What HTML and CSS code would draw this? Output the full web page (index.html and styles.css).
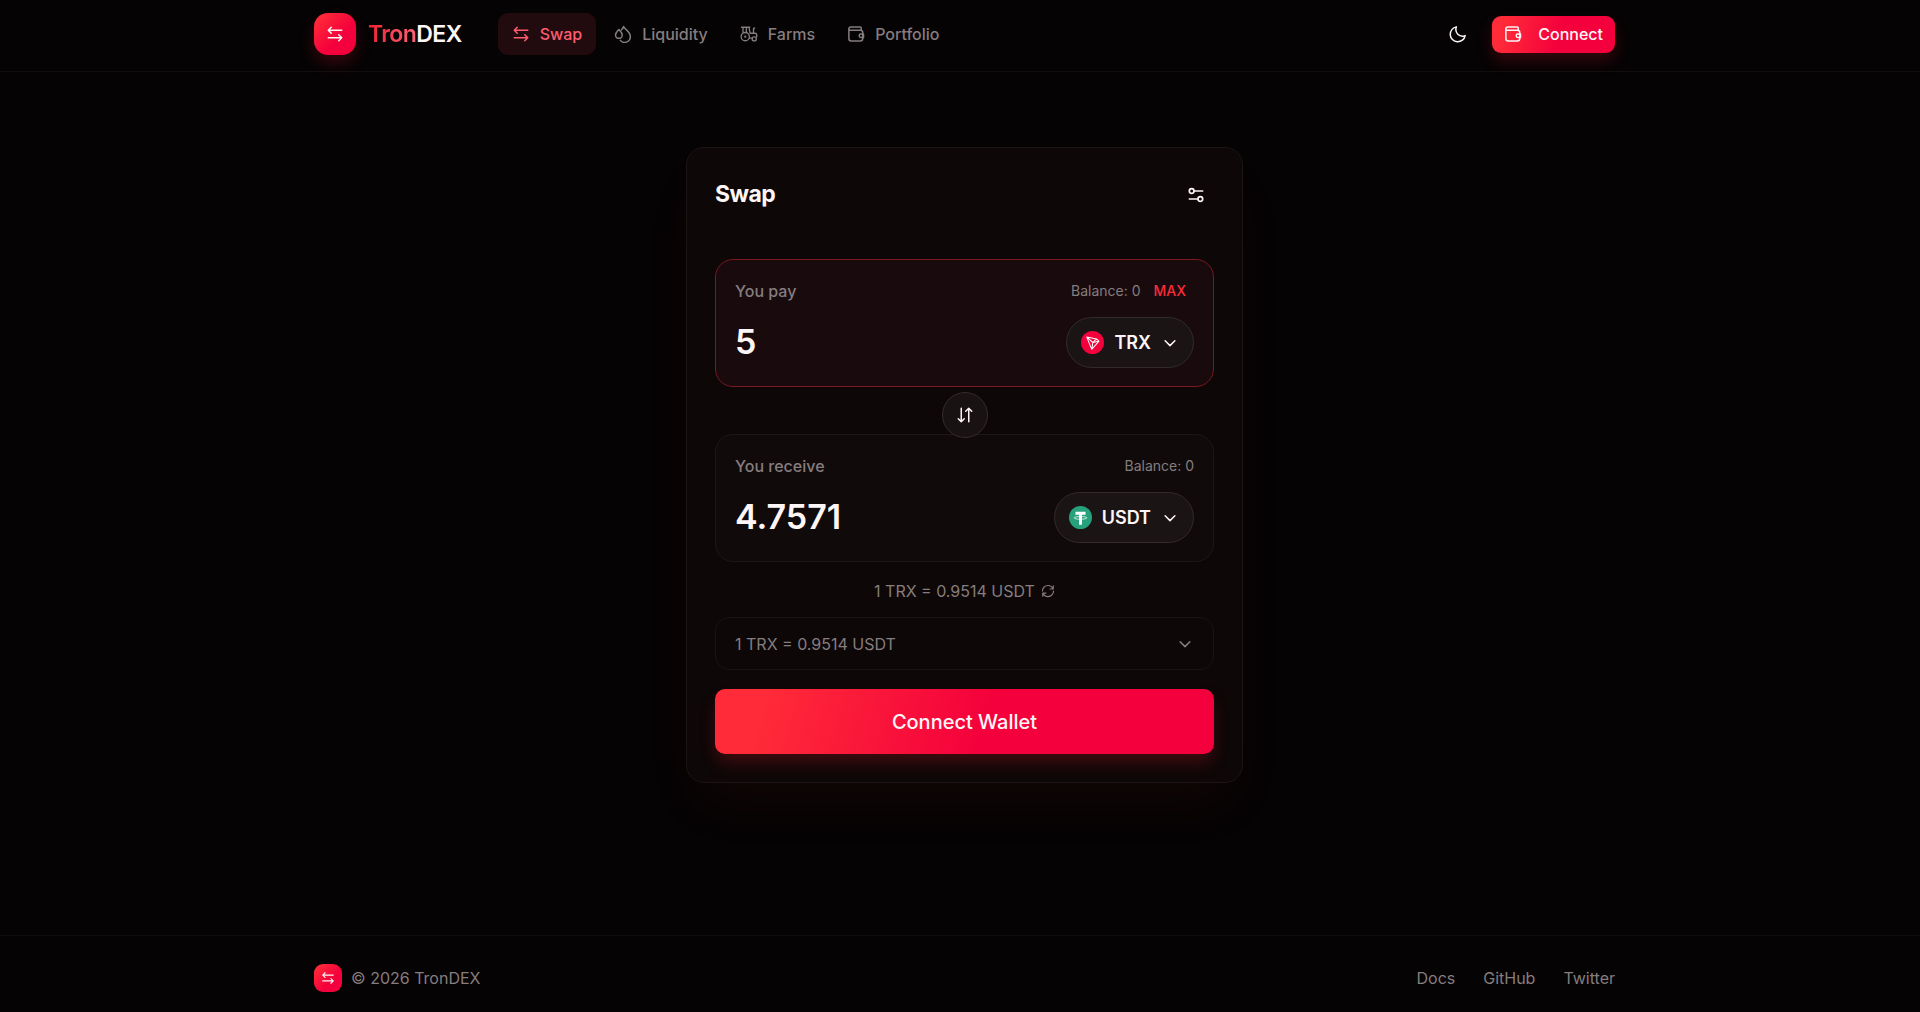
FILE: index.html
```html
<!DOCTYPE html>
<html lang="en">
<head>
<meta charset="utf-8">
<meta name="viewport" content="width=device-width, initial-scale=1">
<title>TronDEX</title>
<link rel="stylesheet" href="styles.css">
</head>
<body>
<svg class="sprite" aria-hidden="true">
  <symbol id="i-swap" viewBox="0 0 24 24"><path d="M21 7H3M7 3 3 7l4 4M3 17H21M17 13l4 4-4 4"/></symbol>
  <symbol id="i-drops" viewBox="0 0 24 24"><path d="M6.500 6C4.800 8.300 2 10.500 2 13.300a4.500 4.500 0 0 0 9 0C11 10.500 8.200 8.300 6.500 6Z"/><path d="M10 6.500C11.500 4.800 12.500 3.400 12.800 2c2.300 4.600 8.900 7 8.900 12.700A7.500 7.500 0 0 1 8.500 20.500"/></symbol>
  <symbol id="i-tractor" viewBox="0 0 24 24"><g stroke-width="1.800"><circle cx="7" cy="15.500" r="5.500"/><circle cx="7" cy="15.500" r=".6"/><circle cx="19" cy="18.500" r="2.700"/><path d="M2 3h11M4 3v6.500M8.500 3v6.500M12 3l1.500 8H20c1.500 0 2.300 1 2.300 2.300V16M12.800 17.500h3.400M18 11V5.500C18 4.500 18.500 4 19.500 4"/></g></symbol>
  <symbol id="i-wallet" viewBox="0 0 24 24"><path d="M2.500 5v13c0 2 1 3.300 3.300 3.300h12c2 0 3.200-1 3.200-3.300v-8c0-2-1-3-3-3H4.500c-1.200 0-2-.8-2-2s.8-2.500 2.500-2.500h12.500c1 0 1.500.5 1.500 1.500v3M22 12h-3.500a2.200 2.200 0 0 0 0 4.500H22z"/></symbol>
  <symbol id="i-moon" viewBox="0 0 24 24"><path d="M21.500 14.080A8.400 8.400 0 0 1 17.900 14.900 8.800 8.800 0 0 1 9.100 6.100C9.100 4.800 9.400 3.600 9.920 2.500A10 10 0 1 0 21.500 14.080Z"/></symbol>
  <symbol id="i-sliders" viewBox="0 0 24 24"><g stroke-width="2.500"><circle cx="5.500" cy="6" r="3.500"/><circle cx="18.500" cy="18" r="3.500"/><path d="M9 6H22M2 18h13"/></g></symbol>
  <symbol id="i-flip" viewBox="0 0 24 24"><path d="M7 3v18M3 17l4 4 4-4M17 21V3M13 7l4-4 4 4"/></symbol>
  <symbol id="i-chevron" viewBox="0 0 24 24"><path d="m5.500 9 6.500 6.500L18.500 9"/></symbol>
  <symbol id="i-refresh" viewBox="0 0 24 24"><path d="M21 3v5.500h-5.500M3 21v-5.500h5.500M2.500 12C2.500 6.500 7 2.500 12 2.500c4 0 7 2 8.700 5.800M21.500 12c0 5.500-4.500 9.500-9.500 9.500-4 0-7-2-8.700-5.800"/></symbol>
</svg>

<header class="site-header">
  <div class="container">
    <a class="brand" href="#">
      <span class="logo"><svg class="icon"><use href="#i-swap"/></svg></span>
      <span class="brand-name"><span class="brand-accent">Tron</span>DEX</span>
    </a>
    <nav class="nav">
      <a class="nav-link active" href="#"><svg class="icon"><use href="#i-swap"/></svg>Swap</a>
      <a class="nav-link" href="#"><svg class="icon"><use href="#i-drops"/></svg>Liquidity</a>
      <a class="nav-link" href="#"><svg class="icon"><use href="#i-tractor"/></svg>Farms</a>
      <a class="nav-link" href="#"><svg class="icon"><use href="#i-wallet"/></svg>Portfolio</a>
    </nav>
    <div class="actions">
      <button class="icon-button" type="button" aria-label="Toggle theme"><svg class="icon"><use href="#i-moon"/></svg></button>
      <button class="connect" type="button"><svg class="icon"><use href="#i-wallet"/></svg>Connect</button>
    </div>
  </div>
</header>

<main class="main">
  <section class="card">
    <div class="card-head">
      <h1 class="card-title">Swap</h1>
      <button class="icon-button" type="button" aria-label="Settings"><svg class="icon small"><use href="#i-sliders"/></svg></button>
    </div>

    <div class="field focused">
      <div class="field-row">
        <label class="label" for="pay">You pay</label>
        <div class="balance">Balance: 0<button class="max" type="button">MAX</button></div>
      </div>
      <div class="field-row">
        <input class="amount" id="pay" type="text" inputmode="decimal" value="5">
        <button class="token" type="button">
          <svg class="coin" viewBox="0 0 32 32"><circle cx="16" cy="16" r="16" fill="#f4003c"/><path d="M8 8.500 21.500 11 25 14.200 15 25.500ZM8 8.500l8.500 7.500L15 25.500M16.500 16l5-5M16.500 16l8.500-1.800" fill="none" stroke="#fff" stroke-width="1.400" stroke-linejoin="round"/></svg>
          TRX<svg class="icon"><use href="#i-chevron"/></svg>
        </button>
      </div>
    </div>

    <div class="flip-row">
      <button class="flip" type="button" aria-label="Switch tokens"><svg class="icon"><use href="#i-flip"/></svg></button>
    </div>

    <div class="field">
      <div class="field-row">
        <label class="label" for="receive">You receive</label>
        <div class="balance">Balance: 0</div>
      </div>
      <div class="field-row">
        <input class="amount" id="receive" type="text" value="4.7571" readonly>
        <button class="token" type="button">
          <svg class="coin" viewBox="0 0 32 32"><circle cx="16" cy="16" r="16" fill="#26a17b"/><path d="M9 8h14v4h-5v14h-4V12H9Z" fill="#fff"/><ellipse cx="16" cy="16.500" rx="9" ry="1.900" fill="none" stroke="#fff" stroke-width="1"/></svg>
          USDT<svg class="icon"><use href="#i-chevron"/></svg>
        </button>
      </div>
    </div>

    <button class="rate" type="button">1 TRX = 0.9514 USDT<svg class="icon"><use href="#i-refresh"/></svg></button>
    <button class="details" type="button" aria-expanded="false">1 TRX = 0.9514 USDT<svg class="icon"><use href="#i-chevron"/></svg></button>
    <button class="submit" type="button">Connect Wallet</button>
  </section>
</main>

<footer class="site-footer">
  <div class="container">
    <div class="copyright"><span class="logo logo-small"><svg class="icon"><use href="#i-swap"/></svg></span>© 2026 TronDEX</div>
    <div class="footer-links">
      <a href="#">Docs</a>
      <a href="#">GitHub</a>
      <a href="#">Twitter</a>
    </div>
  </div>
</footer>
</body>
</html>
```
FILE: styles.css
```css
:root {
  --bg: #050304;
  --text: #fdf5f6;
  --muted: #857d7e;
  --line: #1c1516;
  --gradient: linear-gradient(135deg, #ff2b38 10%, #f4003c 60%);
  --gradient-button: linear-gradient(105deg, #ff2b38 10%, #f4003c 55%);
}

* { box-sizing: border-box; }

body {
  margin: 0;
  min-height: 100vh;
  display: flex;
  flex-direction: column;
  background: var(--bg);
  color: var(--text);
  font: 400 16px/24px Inter, "Liberation Sans", sans-serif;
}

a { color: inherit; text-decoration: none; }

button {
  margin: 0;
  padding: 0;
  border: 0;
  background: none;
  color: inherit;
  font: inherit;
  cursor: pointer;
}

.sprite { display: none; }

.icon {
  width: 18px;
  height: 18px;
  flex: none;
  fill: none;
  stroke: currentColor;
  stroke-width: 2;
  stroke-linecap: round;
  stroke-linejoin: round;
}
.icon.small { width: 16px; height: 16px; }

.site-header,
.main,
.site-footer { padding-left: 9px; }

.container {
  width: 100%;
  max-width: 1301px;
  margin: 0 auto;
  display: flex;
  align-items: center;
}

.site-header { border-bottom: 1px solid #120e0f; }
.site-header .container { padding: 13px 0 16px; }

.brand { display: flex; align-items: center; gap: 12px; margin-right: 36px; }
.brand-name { font-size: 23px; line-height: 32px; font-weight: 600; letter-spacing: -0.025em; }
.brand-accent {
  background: linear-gradient(90deg, #ee2232, #ff6377);
  background-clip: text;
  -webkit-background-clip: text;
  color: transparent;
}

.logo {
  width: 42px;
  height: 42px;
  display: grid;
  place-items: center;
  border-radius: 14px;
  background: var(--gradient);
  box-shadow: 0 8px 16px rgba(244, 30, 45, 0.2);
}
.logo-small { width: 28px; height: 28px; border-radius: 9px; box-shadow: none; }
.logo-small .icon { width: 14px; height: 14px; }

.nav { display: flex; gap: 4px; }
.nav-link {
  display: flex;
  align-items: center;
  gap: 10px;
  padding: 9px 14px;
  border-radius: 10px;
  color: var(--muted);
  font-weight: 500;
}
.nav-link.active { background: #220b0e; color: #ff5c70; }

.actions { display: flex; align-items: center; gap: 16px; margin-left: auto; }
.icon-button { width: 37px; height: 37px; display: grid; place-items: center; }
.connect {
  display: flex;
  align-items: center;
  gap: 16px;
  height: 37px;
  padding: 0 12px;
  border-radius: 9px;
  background: var(--gradient-button);
  box-shadow: 0 8px 16px rgba(244, 30, 45, 0.2);
  font-weight: 500;
}

.main { flex: 1; padding-top: 75px; padding-bottom: 75px; }

.card {
  max-width: 557px;
  margin: 0 auto;
  padding: 28px;
  border: 1px solid #1d1415;
  border-radius: 18px;
  background: #0d0707;
  box-shadow: 0 29px 58px -10px rgba(244, 60, 40, 0.06);
}
.card-head {
  display: flex;
  align-items: center;
  justify-content: space-between;
  margin-bottom: 46px;
}
.card-title { margin: 0; font-size: 23px; line-height: 37px; font-weight: 700; letter-spacing: -0.025em; }

.field {
  padding: 19px;
  border: 1px solid #1e1718;
  border-radius: 18px;
  background: #110a0b;
}
.field.focused { border-color: #7c1820; background: #190a0d; }
.field-row { display: flex; align-items: center; justify-content: space-between; }
.field-row + .field-row { margin-top: 14px; }
.label { color: var(--muted); font-weight: 500; }
.balance { display: flex; align-items: center; gap: 5px; color: var(--muted); font-size: 14px; }
.max { padding: 0 8px; color: #fb2c3c; font-weight: 500; }
.amount {
  flex: 1;
  min-width: 0;
  height: 42px;
  padding: 0;
  border: 0;
  outline: 0;
  background: none;
  color: var(--text);
  font: 600 34px/42px Inter, "Liberation Sans", sans-serif;
}
.token {
  display: flex;
  align-items: center;
  gap: 10px;
  height: 51px;
  margin-bottom: -1px;
  padding: 0 14px;
  border: 1px solid #322a2b;
  border-radius: 26px;
  background: #1b1415;
  font-size: 18px;
  font-weight: 600;
}
.coin { width: 23px; height: 23px; }

.flip-row { display: flex; justify-content: center; height: 47px; padding-top: 5px; }
.flip {
  position: relative;
  width: 46px;
  height: 46px;
  display: grid;
  place-items: center;
  border: 1px solid #342c2d;
  border-radius: 50%;
  background: #191213;
}

.rate {
  display: flex;
  align-items: center;
  justify-content: center;
  gap: 6px;
  width: 100%;
  margin: 17px 0 14px;
  color: var(--muted);
}
.rate .icon { width: 14px; height: 14px; }
.details {
  display: flex;
  align-items: center;
  justify-content: space-between;
  width: 100%;
  height: 53px;
  padding: 0 19px;
  border: 1px solid #1a1314;
  border-radius: 14px;
  color: var(--muted);
}
.submit {
  display: block;
  width: 100%;
  height: 65px;
  margin-top: 19px;
  border-radius: 10px;
  background: var(--gradient-button);
  box-shadow: 0 10px 18px -2px rgba(244, 30, 45, 0.24);
  font-size: 20px;
  font-weight: 500;
}

.site-footer { border-top: 1px solid #100d0e; }
.site-footer .container {
  justify-content: space-between;
  padding: 28px 0 20px;
  color: var(--muted);
}
.copyright { display: flex; align-items: center; gap: 9px; color: var(--muted); }
.copyright .logo { color: var(--text); }
.footer-links { display: flex; gap: 28px; }
```
